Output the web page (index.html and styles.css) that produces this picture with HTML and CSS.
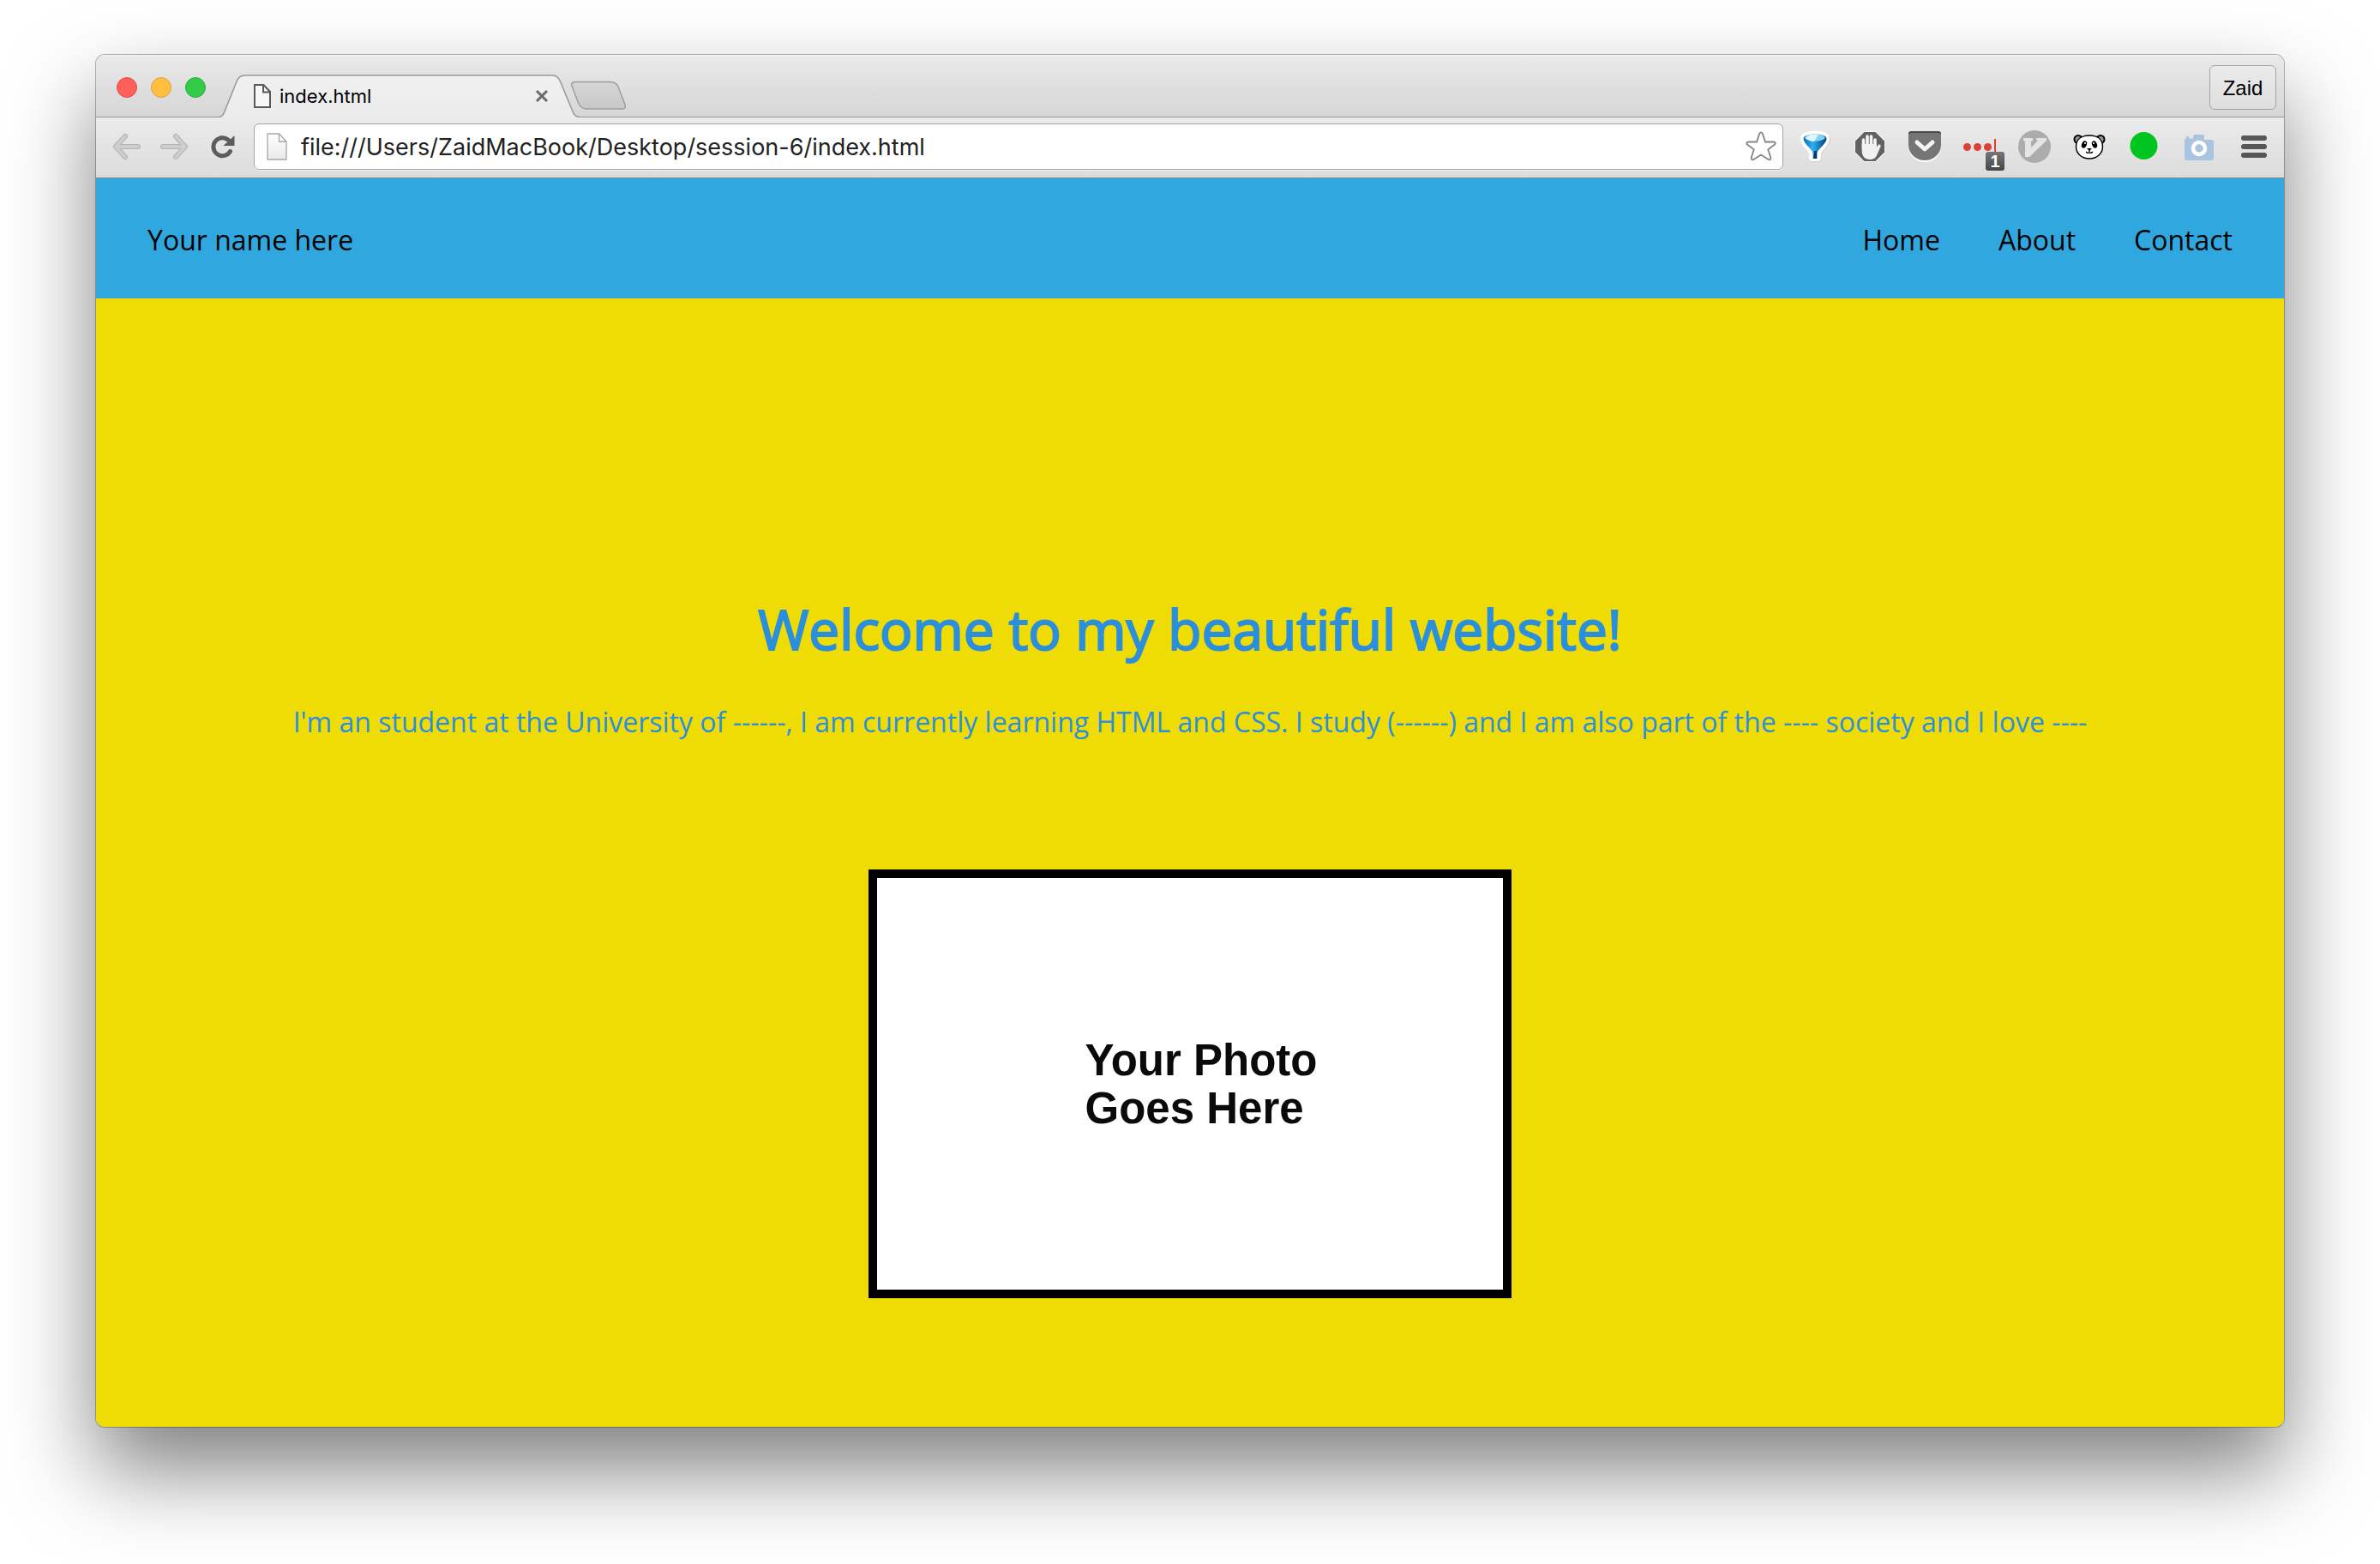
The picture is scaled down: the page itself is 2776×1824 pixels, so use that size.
FILE: index.html
```html
<!DOCTYPE html>
<html lang="en">
<head>
<meta charset="utf-8">
<title>index.html</title>
<link rel="stylesheet" href="styles.css">
</head>
<body>
<div class="window">
  <div class="tab-strip">
    <div class="lights">
      <button class="light light-close" aria-label="Close window"></button>
      <button class="light light-min" aria-label="Minimize window"></button>
      <button class="light light-max" aria-label="Zoom window"></button>
    </div>
    <div class="tab">
      <svg class="tab-shape" width="420" height="50" viewBox="0 0 420 50" aria-hidden="true">
        <defs><linearGradient id="tabFill" x1="0" y1="0" x2="0" y2="1"><stop offset="0" stop-color="#f1f1f1"/><stop offset="1" stop-color="#ebebeb"/></linearGradient></defs>
        <path d="M0 50V49.5C3 49 4.500 47 6 43L20 8C22 3 25 .8 30 .8H388C393 .8 395.500 3 397.500 8L412 43C413.500 47 415 49 420 49.500V50Z" fill="url(#tabFill)"/>
        <path d="M0 49.5C3 49 4.500 47 6 43L20 8C22 3 25 .8 30 .8H388C393 .8 395.500 3 397.500 8L412 43C413.500 47 415 49 420 49.500" fill="none" stroke="#969696" stroke-width="1.5"/>
      </svg>
      <svg class="tab-icon" width="22" height="30" viewBox="0 0 22 30" aria-hidden="true"><path d="M2 2H12.500L20 10V28H2ZM12 2V10.500H20" fill="#f7f7f7" stroke="#5a5a5a" stroke-width="2"/></svg>
      <span class="tab-title">index.html</span>
      <button class="tab-close" aria-label="Close tab"><svg width="16" height="16" viewBox="0 0 16 16"><path d="M2 2L14 14M14 2L2 14" stroke="#6a6a6a" stroke-width="3"/></svg></button>
    </div>
    <button class="new-tab" aria-label="New tab"><svg width="66" height="36" viewBox="0 0 66 36">
      <defs><linearGradient id="newFill" x1="0" y1="0" x2="0" y2="1"><stop offset="0" stop-color="#d6d6d6"/><stop offset="1" stop-color="#c8c8c8"/></linearGradient></defs>
      <path d="M6 1.500H46C51 1.500 54 3 56 7L64 28C65 31 64 33 61 33H19C14 33 12 31 10 27L2 6C1 3 3 1.500 6 1.500Z" fill="url(#newFill)" stroke="#9d9d9d" stroke-width="1.500"/></svg></button>
    <button class="profile">Zaid</button>
  </div>

  <div class="toolbar">
    <button class="tool nav-tool" aria-label="Back"><svg width="34" height="32" viewBox="0 0 34 32"><path d="M15 4L4 16L15 28M5 16H30" fill="none" stroke="#b3b3b3" stroke-width="6" stroke-linecap="round" stroke-linejoin="round"/><path d="M15 4L4 16L15 28M5 16H30" fill="none" stroke="#cdcdcd" stroke-width="4" stroke-linecap="round" stroke-linejoin="round"/></svg></button>
    <button class="tool nav-tool" aria-label="Forward"><svg width="34" height="32" viewBox="0 0 34 32"><path d="M18 4L29 16L18 28M28 16H3" fill="none" stroke="#b3b3b3" stroke-width="6" stroke-linecap="round" stroke-linejoin="round"/><path d="M18 4L29 16L18 28M28 16H3" fill="none" stroke="#cdcdcd" stroke-width="4" stroke-linecap="round" stroke-linejoin="round"/></svg></button>
    <button class="tool nav-tool" aria-label="Reload"><svg width="32" height="32" viewBox="0 0 32 32"><path d="M24.500 21.500A10.500 10.500 0 1 1 22 8" fill="none" stroke="#5c5c5c" stroke-width="5" stroke-linecap="round"/><path d="M29.500 3V15H16.500Z" fill="#5c5c5c"/></svg></button>
    <div class="omnibox">
      <svg width="24" height="32" viewBox="0 0 24 32" aria-hidden="true">
        <defs><linearGradient id="docFill" x1="0" y1="0" x2="0" y2="1"><stop offset="0" stop-color="#fff"/><stop offset="1" stop-color="#e9e9ec"/></linearGradient></defs>
        <path d="M1 1H14.500L23 10V31H1ZM14.500 1V10H23" fill="url(#docFill)" stroke="#a6a6a6" stroke-width="1.300"/></svg>
      <input class="url" type="text" aria-label="Address" value="file:///Users/ZaidMacBook/Desktop/session-6/index.html">
      <button class="star" aria-label="Bookmark this page"><svg width="38" height="38" viewBox="0 0 38 38"><path d="M19 2.500C20.200 2.500 20.700 3.500 21 4.400L24 13.500H33.500C36 13.500 36.500 15.500 34.800 16.800L27.300 22.300L30.200 31.500C31 34 29.300 35.200 27.200 33.800L19 28.500L10.800 33.800C8.700 35.200 7 34 7.800 31.500L10.700 22.300L3.200 16.800C1.500 15.500 2 13.500 4.500 13.500H14L17 4.400C17.300 3.500 17.800 2.500 19 2.500Z" fill="#fff" stroke="#858585" stroke-width="1.800"/></svg></button>
    </div>

    <button class="tool" aria-label="Funnel extension"><svg width="40" height="40" viewBox="0 0 40 40">
      <defs><linearGradient id="fun" x1="0" y1="0" x2="1" y2="0"><stop offset="0" stop-color="#0a6fb5"/><stop offset=".4" stop-color="#2cb0f2"/><stop offset="1" stop-color="#033f78"/></linearGradient></defs>
      <path d="M8 11C10 5 31 5 34 11C34 18 26 22 23.500 27V34H17.500V27C15 22 8 18 8 11Z" fill="#c8c8c8" stroke="#cdcdcd" stroke-width="8" stroke-linejoin="round"/>
      <path d="M7 10C9 4 31 4 33 10C33 18 25 21 23 27V33H17V27C15 21 7 18 7 10Z" fill="#fff" stroke="#fff" stroke-width="8" stroke-linejoin="round"/>
      <path d="M6.500 10C9 4 31 4 33.500 10C33.500 17 25 21 22.500 27V34H17.500V27C15 21 6.500 17 6.500 10Z" fill="url(#fun)"/><path d="M8 10C11 4 29 4 32 10C27 15 13 15 8 10Z" fill="#7fd3fa"/><path d="M11 8C14 5 22 5 24 6L19 14C15 14 11 12 9 10Z" fill="#e3f6ff"/><path d="M19 25H22V34H18Z" fill="#063a6d"/></svg></button>
    <button class="tool" aria-label="Blocker extension"><svg width="40" height="40" viewBox="0 0 40 40">
      <path d="M13 2H27L38 13V27L27 38H13L2 27V13Z" fill="#f7f7f7"/><path d="M13.500 3H26.500L37 13.500V26.500L26.500 37H13.500L3 26.500V13.500Z" fill="#626262"/>
      <path d="M12.500 22V12M17 20V8M21.500 20V8M26 22V12" stroke="#f4f4f4" stroke-width="3.600" stroke-linecap="round"/><path d="M10.700 17H27.800V21L29 19C30.500 16.500 33.500 17.500 32.500 20L29 28C27.500 32.500 25 35 20 35C14 35 10.700 31 10.700 25Z" fill="#f1f1f1"/></svg></button>
    <button class="tool" aria-label="Save extension"><svg width="40" height="40" viewBox="0 0 40 40">
      <path d="M1 6Q1 3 4 3H36Q39 3 39 6V20A19 18 0 0 1 1 20Z" fill="#fff"/><path d="M1 6Q1 3 4 3H36Q39 3 39 6V18A19 18 0 0 1 1 18Z" fill="#757575"/><path d="M2 5Q2 3 4 3H36Q38 3 38 5" fill="none" stroke="#4b4b4b" stroke-width="2"/><path d="M11 15L20 23L29 15" fill="none" stroke="#f4f4f4" stroke-width="5" stroke-linecap="round" stroke-linejoin="round"/></svg></button>
    <button class="tool" aria-label="Password extension, 1 item"><svg width="40" height="40" viewBox="0 0 40 40"><g fill="#dc4038"><circle cx="5.500" cy="20.500" r="4.500"/><circle cx="17.500" cy="20.500" r="4.500"/><circle cx="29.500" cy="20.500" r="4.500"/><path d="M37 11H39V28H37Z"/></g></svg><span class="badge">1</span></button>
    <button class="tool" aria-label="Vim extension"><svg width="40" height="40" viewBox="0 0 40 40"><circle cx="20" cy="20" r="19" fill="#acacac"/><path d="M7 10H18V13L16 14V21L24 13L22 12V10H34V13L14 32H9V14L7 13Z" fill="#e4e4e4"/></svg></button>
    <button class="tool" aria-label="Panda extension"><svg width="40" height="40" viewBox="0 0 40 40">
      <circle cx="7" cy="11.500" r="4.500" fill="#999" stroke="#000" stroke-width="2"/><circle cx="33" cy="11.500" r="4.500" fill="#999" stroke="#000" stroke-width="2"/><path d="M20 7C30 7 35.500 12 35.500 20C35.500 28 29 34 20 34C11 34 4.500 28 4.500 20C4.500 12 10 7 20 7Z" fill="#fff" stroke="#000" stroke-width="1.500"/>
      <ellipse cx="14" cy="17.500" rx="2.900" ry="4.300" transform="rotate(22 14 17.500)"/><ellipse cx="26" cy="17.500" rx="2.900" ry="4.300" transform="rotate(-22 26 17.500)"/><circle cx="15" cy="16" r="1" fill="#fff"/><circle cx="25" cy="16" r="1" fill="#fff"/><path d="M17 22H23L20 25Z"/><path d="M20 24V27M16 26Q18 28 20 27Q22 28 24 26" fill="none" stroke="#000" stroke-width="1.300"/></svg></button>
    <button class="tool" aria-label="Status extension"><svg width="40" height="40" viewBox="0 0 40 40"><circle cx="19.500" cy="19" r="16" fill="#00c41f"/></svg></button>
    <button class="tool" aria-label="Screenshot extension"><svg width="40" height="40" viewBox="0 0 40 40"><path d="M3 12Q3 10.500 5 10.500V8H8V10.500H13V8Q13 6 15 6H24Q26 6 26 8V12H34Q37 12 37 15V33Q37 36 34 36H6Q3 36 3 33Z" fill="#a8c4de"/><circle cx="20" cy="22" r="7" fill="#a8c4de" stroke="#fff" stroke-width="4.500"/></svg></button>
    <button class="tool" aria-label="Menu"><svg width="34" height="34" viewBox="0 0 34 34"><path d="M5 7H29M5 17H29M5 27H29" stroke="#565656" stroke-width="6" stroke-linecap="round"/></svg></button>
  </div>

  <header class="site-header">
    <span>Your name here</span>
    <nav class="site-nav"><a href="#home">Home</a><a href="#about">About</a><a href="#contact">Contact</a></nav>
  </header>
  <main class="hero" id="home">
    <h1>Welcome to my beautiful website!</h1>
    <p>I'm an student at the University of ------, I am currently learning HTML and CSS. I study (------) and I am also part of the ---- society and I love ----</p>
    <div class="photo"><span>Your Photo<br>Goes Here</span></div>
  </main>
</div>
</body>
</html>
```
FILE: styles.css
```css
* { box-sizing: border-box; }
body {
  margin: 0;
  min-height: 100vh;
  padding: 64px 112px 160px;
  display: flex;
  background: #fff;
  color: #000;
  font-family: "Open Sans", sans-serif;
}
button { border: 0; padding: 0; background: none; color: inherit; font: inherit; }
svg { display: block; flex: none; }

.window {
  flex: 1;
  min-width: 0;
  display: flex;
  flex-direction: column;
  border-radius: 10px;
  overflow: hidden;
  box-shadow: 0 0 0 1px rgba(0, 0, 0, .28), 0 50px 100px rgba(0, 0, 0, .5);
}

.tab-strip {
  display: flex;
  align-items: flex-end;
  height: 73px;
  padding: 0 9px 0 24px;
  border-top: 2px solid #f0f0f0;
  background: linear-gradient(#e9e9e9, #d6d6d6);
  box-shadow: inset 0 -1px #969696;
}
.lights { display: flex; gap: 16px; margin-bottom: 23px; }
.light { width: 24px; height: 24px; border-radius: 50%; border: 1px solid; }
.light-close { background: #ff6059; border-color: #e24a46; }
.light-min { background: #ffc041; border-color: #dfa136; }
.light-max { background: #33cb48; border-color: #25ad35; }
.tab {
  position: relative;
  display: flex;
  align-items: center;
  width: 420px;
  height: 50px;
  margin-left: 16px;
  padding: 0 36px 0 39px;
}
.tab-shape { position: absolute; inset: 0; }
.tab-icon, .tab-title, .tab-close { position: relative; }
.tab-title { flex: 1; margin-left: 9px; font: 22px/28px Inter, sans-serif; }
.new-tab { margin: 0 auto 7px -11px; z-index: 1; }
.profile {
  width: 78px;
  height: 52px;
  margin-bottom: 9px;
  padding-top: 2px;
  border: 1px solid #a3a3a3;
  border-radius: 6px;
  background: linear-gradient(#ebebeb, #dedede);
  font: 24px/28px "Liberation Sans", sans-serif;
}

.toolbar {
  display: flex;
  align-items: center;
  height: 71px;
  padding: 0 3px 3px 8px;
  border-bottom: 1px solid #858585;
  background: linear-gradient(#ebebeb, #dcdcdc);
}
.tool { position: relative; flex: none; width: 64px; height: 56px; display: flex; align-items: center; justify-content: center; }
.nav-tool { width: 56px; }
.omnibox {
  flex: 1;
  min-width: 0;
  display: flex;
  align-items: center;
  height: 54px;
  margin: 0 5px 0 8px;
  padding: 0 6px 0 14px;
  border: 1px solid #a2a2a2;
  border-radius: 6px;
  background: #fff;
  box-shadow: 0 1px #f2f2f2;
}
.url {
  flex: 1;
  min-width: 0;
  padding: 3px 0 0;
  margin-left: 16px;
  border: 0;
  background: none;
  color: #222;
  font: 27px/36px Inter, sans-serif;
}
.badge {
  position: absolute;
  right: 3px;
  bottom: 0;
  width: 22px;
  height: 22px;
  border-radius: 3px;
  background: linear-gradient(#777, #454545);
  color: #fff;
  font: bold 20px/22px "Liberation Sans", sans-serif;
}

.site-header {
  display: flex;
  align-items: center;
  justify-content: space-between;
  height: 140px;
  padding: 4px 60px 0;
  background: #30a8df;
  font-size: 32px;
  line-height: 44px;
}
.site-nav { display: flex; gap: 68px; }
.site-nav a { color: inherit; text-decoration: none; }

.hero {
  flex: 1;
  display: flex;
  flex-direction: column;
  align-items: center;
  padding: 342px 60px 150px;
  background: #efdc05;
  color: #2b8fdc;
  text-align: center;
}
.hero h1 {
  margin: 0;
  font-size: 64px;
  line-height: 88px;
  font-weight: 400;
  -webkit-text-stroke: 2px #2b8fdc;
}
.hero p { margin: 42px 0 0; font-size: 32px; line-height: 44px; }
.photo {
  display: flex;
  align-items: center;
  justify-content: center;
  width: 750px;
  height: 500px;
  margin-top: 150px;
  padding: 2px 0 0 26px;
  border: 10px solid #000;
  background: #fff;
  color: #0a0a0a;
  font: bold 51px/56px "Liberation Sans", sans-serif;
  text-align: left;
}
```
